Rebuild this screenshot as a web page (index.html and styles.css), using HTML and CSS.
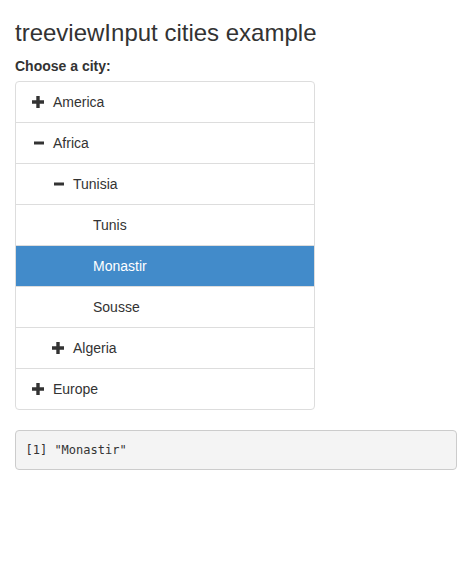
FILE: index.html
```html
<!DOCTYPE html>
<html>
<head>
<meta charset="utf-8">
<link rel="stylesheet" href="styles.css">
</head>
<body>
<div class="container">
  <h2 class="title">treeviewInput cities example</h2>
  <label class="label">Choose a city:</label>
  <ul class="tree">
    <li class="node"><span class="icon"><svg viewBox="0 0 12 12" width="12" height="12"><path d="M4.3 0h3.4v4.3H12v3.4H7.7V12H4.3V7.7H0V4.3h4.3z" fill="#333"/></svg></span>America</li>
    <li class="node"><span class="icon"><svg viewBox="0 0 12 12" width="12" height="12"><rect x="2" y="4.5" width="10" height="3" fill="#333"/></svg></span>Africa</li>
    <li class="node"><span class="indent"></span><span class="icon"><svg viewBox="0 0 12 12" width="12" height="12"><rect x="2" y="4.5" width="10" height="3" fill="#333"/></svg></span>Tunisia</li>
    <li class="node"><span class="indent"></span><span class="indent"></span><span class="icon"></span>Tunis</li>
    <li class="node selected"><span class="indent"></span><span class="indent"></span><span class="icon"></span>Monastir</li>
    <li class="node"><span class="indent"></span><span class="indent"></span><span class="icon"></span>Sousse</li>
    <li class="node"><span class="indent"></span><span class="icon"><svg viewBox="0 0 12 12" width="12" height="12"><path d="M4.3 0h3.4v4.3H12v3.4H7.7V12H4.3V7.7H0V4.3h4.3z" fill="#333"/></svg></span>Algeria</li>
    <li class="node"><span class="icon"><svg viewBox="0 0 12 12" width="12" height="12"><path d="M4.3 0h3.4v4.3H12v3.4H7.7V12H4.3V7.7H0V4.3h4.3z" fill="#333"/></svg></span>Europe</li>
  </ul>
  <pre class="output">[1] "Monastir"</pre>
</div>
</body>
</html>
```
FILE: styles.css
```css
html, body {
  margin: 0;
  padding: 0;
  background: #fff;
}
body {
  font-family: "Liberation Sans", Arial, sans-serif;
  font-size: 14px;
  line-height: 20px;
  color: #333;
}
.container {
  padding: 0 15px;
}
.title {
  margin: 20px 0 10px;
  font-size: 24px;
  line-height: 26.4px;
  font-weight: 500;
}
.label {
  display: block;
  font-weight: bold;
  margin-bottom: 5px;
}
.tree {
  list-style: none;
  margin: 0 0 20px;
  padding: 0;
  width: 300px;
  border: 1px solid #ddd;
  border-radius: 4px;
  box-sizing: border-box;
  overflow: hidden;
}
.node {
  display: flex;
  align-items: center;
  height: 40px;
  padding: 0 15px;
  border-top: 1px solid #ddd;
}
.node:first-child {
  border-top: none;
}
.node.selected {
  background: #428bca;
  color: #fff;
}
.indent {
  width: 20px;
  flex: none;
}
.icon {
  width: 12px;
  height: 12px;
  margin-left: 1px;
  margin-right: 9px;
  flex: none;
  display: flex;
}
.output {
  margin: 0;
  padding: 9.5px;
  background: #f4f4f4;
  border: 1px solid #ccc;
  border-radius: 4px;
  font-family: "DejaVu Sans Mono", "Liberation Mono", monospace;
  font-size: 12px;
  line-height: 18.5px;
  color: #333;
}
```
